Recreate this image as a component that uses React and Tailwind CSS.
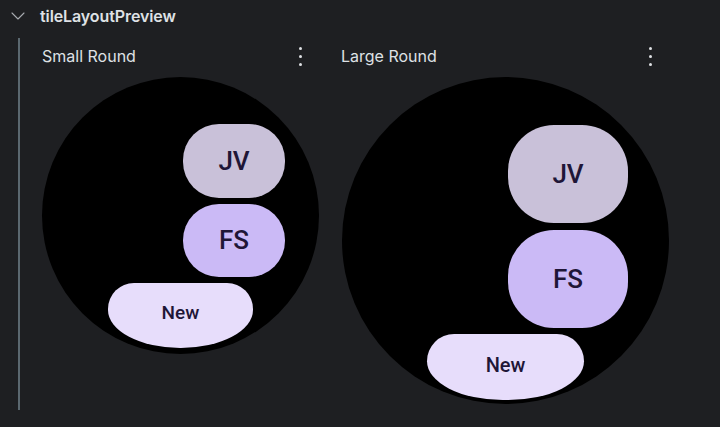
import { ChevronDown } from "lucide-react";

function Kebab() {
  return (
    <div className="flex flex-col items-center gap-[5px] w-[4px]">
      <div className="w-[3px] h-[3px] rounded-full bg-[#dfe1e5]"></div>
      <div className="w-[3px] h-[3px] rounded-full bg-[#dfe1e5]"></div>
      <div className="w-[3px] h-[3px] rounded-full bg-[#dfe1e5]"></div>
    </div>
  );
}

function SmallRound() {
  return (
    <div className="w-[277px] h-[277px] rounded-full bg-black overflow-hidden flex flex-col items-center pt-[47px] font-['Roboto',sans-serif] font-medium text-[#1f1637]">
      <div className="self-end shrink-0 mr-[34px] w-[102px] h-[74px] rounded-[36px] bg-[#c9c1d9] flex items-center justify-center text-[26px]">
        JV
      </div>
      <div className="self-end shrink-0 mr-[34px] mt-[6px] w-[102px] h-[73px] rounded-[36px] bg-[#cbbaf6] flex items-center justify-center text-[26px]">
        FS
      </div>
      <div className="mt-[6px] w-[145px] h-[65px] shrink-0 rounded-[26px_26px_72px_72px/26px_26px_38px_38px] bg-[#e7ddfb] flex justify-center pt-[16px] text-[19px]">
        New
      </div>
    </div>
  );
}

function LargeRound() {
  return (
    <div className="w-[327px] h-[327px] rounded-full bg-black overflow-hidden flex flex-col items-center pt-[48px] font-['Roboto',sans-serif] font-medium text-[#1f1637]">
      <div className="self-end shrink-0 mr-[41px] w-[120px] h-[98px] rounded-[46px] bg-[#c9c1d9] flex items-center justify-center text-[26px]">
        JV
      </div>
      <div className="self-end shrink-0 mr-[41px] mt-[7px] w-[120px] h-[98px] rounded-[46px] bg-[#cbbaf6] flex items-center justify-center text-[26px]">
        FS
      </div>
      <div className="mt-[6px] w-[157px] h-[66px] shrink-0 rounded-[28px_28px_78px_78px/28px_28px_40px_40px] bg-[#e7ddfb] flex justify-center pt-[16px] text-[20px]">
        New
      </div>
    </div>
  );
}

export default function App() {
  return (
    <div className="w-[720px] h-[427px] bg-[#1e1f22] text-[#dfe1e5] font-['Inter',sans-serif] overflow-hidden">
      <div className="h-[32px] flex items-center pl-[6px]">
        <ChevronDown size={24} strokeWidth={1.1} className="text-[#a8abb0]" />
        <span className="ml-[10px] text-[16px] font-semibold tracking-[-0.1px]">tileLayoutPreview</span>
      </div>
      <div className="ml-[18px] mt-[6px] border-l-2 border-[#5b6870] h-[372px] flex pl-[22px]">
        <div className="w-[299px] flex flex-col">
          <div className="h-[36px] flex items-center justify-between w-[260px]">
            <span className="text-[16px]">Small Round</span>
            <Kebab />
          </div>
          <div className="mt-[3px]">
            <SmallRound />
          </div>
        </div>
        <div className="flex flex-col">
          <div className="h-[36px] flex items-center justify-between w-[311px]">
            <span className="text-[16px]">Large Round</span>
            <Kebab />
          </div>
          <div className="mt-[3px] ml-[1px]">
            <LargeRound />
          </div>
        </div>
      </div>
    </div>
  );
}
